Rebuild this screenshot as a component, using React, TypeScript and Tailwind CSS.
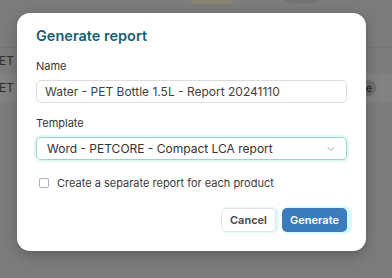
import React from 'react';
import { ChevronDown } from 'lucide-react';

export default function App() {
  return (
    <div className="relative h-[278px] w-[392px] overflow-hidden bg-[#7c7c7c] font-['Inter',sans-serif]">
      {/* Dimmed page behind the dialog */}
      <div className="flex flex-col text-[12px] text-[#2e2e2e]">
        <div className="flex h-[47px] items-start">
          <div className="ml-[190px] -mt-[6px] h-[10px] w-[44px] rounded-full bg-[#8a8470]" />
          <div className="ml-[50px] -mt-[8px] h-[11px] w-[34px] rounded-full bg-[#727272]" />
        </div>
        <div className="h-[1px] bg-[#747474]" />
        <div className="flex h-[26px] items-center">
          <span className="-ml-[1px]">ET b</span>
        </div>
        <div className="flex h-[28px] items-center justify-between bg-[#828282]">
          <span className="-ml-[1px]">ET b</span>
          <span className="mr-[16px] flex h-[16px] w-[22px] items-center justify-end rounded-full bg-[#6e6e6e] pr-[4px] text-[10px] font-semibold text-[#2a2a2a]">
            e
          </span>
        </div>
      </div>

      {/* Dialog */}
      <div className="absolute left-[17px] top-[13px] w-[349px] rounded-[13px] bg-white px-[19px] pb-[19px] pt-[13px] shadow-[0_4px_14px_rgba(0,0,0,0.25)]">
        <h2 className="text-[14.5px] font-semibold leading-[20px] text-[#175f72]">Generate report</h2>

        <label className="mt-[12px] block text-[11px] leading-[16px] text-[#333]">Name</label>
        <div className="mt-[6px] flex h-[23px] items-center rounded-[5px] border border-[#dcdcdc] px-[8px] text-[12px] text-[#3f3f3f]">
          Water - PET Bottle 1.5L - Report 20241110
        </div>

        <label className="mt-[12px] block text-[11px] leading-[16px] text-[#333]">Template</label>
        <div className="mt-[6px] flex h-[23px] items-center justify-between rounded-[5px] border border-[#9dd4c9] pl-[10px] pr-[9px] text-[12px] text-[#333] shadow-[0_0_0_2px_rgba(190,240,235,0.45)]">
          <span>Word - PETCORE - Compact LCA report</span>
          <ChevronDown className="h-[12px] w-[12px] text-[#8a8a8a]" strokeWidth={1.5} />
        </div>

        <div className="mt-[15px] flex items-center gap-[8px] pl-[3px]">
          <span className="h-[10px] w-[10px] rounded-[2px] border border-[#b0b0b0] bg-white" />
          <span className="text-[11px] leading-[16px] text-[#3a3a3a]">Create a separate report for each product</span>
        </div>

        <div className="mt-[17px] flex justify-end gap-[6px]">
          <button className="h-[24px] w-[55px] rounded-[5px] border border-[#e2e2e2] bg-white text-[11px] font-semibold text-[#444] shadow-[2px_0_0_1px_rgba(210,250,250,0.7)]">
            Cancel
          </button>
          <button className="h-[24px] w-[65px] rounded-[5px] bg-[#3c7cbd] text-[11px] font-semibold text-white shadow-[3px_0_0_2px_rgba(210,250,252,0.9)]">
            Generate
          </button>
        </div>
      </div>
    </div>
  );
}
